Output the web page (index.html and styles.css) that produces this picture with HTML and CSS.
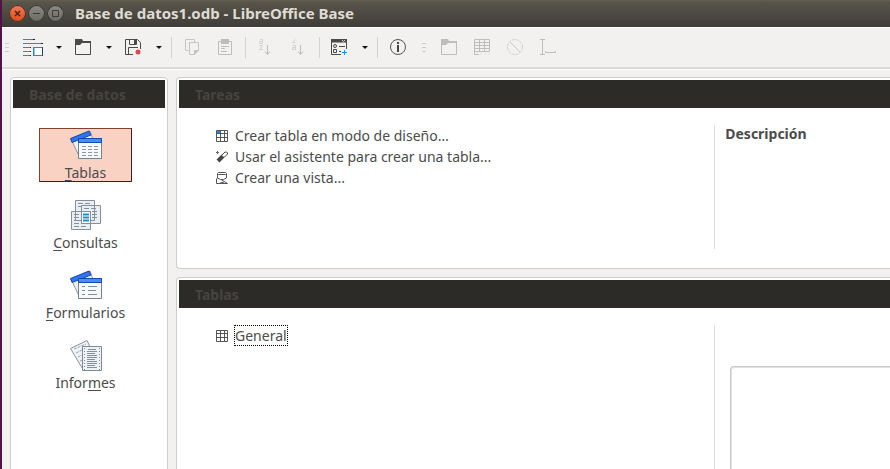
FILE: index.html
```html
<!DOCTYPE html>
<html lang="es">
<head>
<meta charset="utf-8">
<title>Base de datos1.odb - LibreOffice Base</title>
<link rel="stylesheet" href="styles.css">
</head>
<body>
<div class="window">
  <header class="titlebar">
    <button class="win-btn close" aria-label="Cerrar"><svg viewBox="0 0 17 17"><path d="M6 6l5 5M11 6l-5 5" stroke="#46261b" stroke-width="1.6"/></svg></button>
    <button class="win-btn" aria-label="Minimizar"><svg viewBox="0 0 17 17"><path d="M5 8.5h7" stroke="#3c3b37"/></svg></button>
    <button class="win-btn" aria-label="Maximizar"><svg viewBox="0 0 17 17"><path d="M5.5 5.5h6v6h-6z" stroke="#3c3b37" fill="none"/></svg></button>
    <h1>Base de datos1.odb - LibreOffice Base</h1>
  </header>

  <div class="toolbar" role="toolbar">
    <span class="grip first"></span>
    <button class="tool" aria-label="Nuevo"><svg viewBox="0 0 17 17"><path d="M-2 .5h12M-2 4.5h20M-2 8.5h8M-2 12.5h8M-2 16.500h8" stroke="#1b8fd6"/><path d="M8 .5h2M16 4.500h2M5 8.5h1M5 12.500h1M5 16.500h1" stroke="#222"/><path d="M9 8.500h8.500v8H9z" fill="#fff" stroke="#1b8fd6"/><path d="M17.500 8v9" stroke="#246"/><path d="M8.500 8v9" stroke="#1b8fd6"/></svg></button>
    <button class="arrow" aria-label="Opciones de nuevo"></button>
    <button class="tool" aria-label="Abrir"><svg viewBox="0 0 17 17"><path d="M.5 1v14.500h15v-12H7" fill="none" stroke="#4a4a4a"/><path d="M0 0h7l1 2h8v2H7L5 6H0z" fill="#4a4a4a"/></svg></button>
    <button class="arrow" aria-label="Abrir reciente"></button>
    <button class="tool" aria-label="Guardar"><svg viewBox="0 0 17 17"><path d="M8 15.500H.5V.5h12l3 3V10M3.500 15V8.500H13M4.500 1v4.500h7V1" fill="none" stroke="#4a4a4a"/><path d="M9 1h2v4H9z" fill="#4a4a4a"/><circle cx="13" cy="13" r="2.500" fill="#e0474c"/></svg></button>
    <button class="arrow" aria-label="Opciones de guardar"></button>
    <span class="sep"></span>
    <button class="tool" disabled aria-label="Copiar"><svg viewBox="0 0 17 17"><path d="M5.500 11.500h-3V.5h9v3M6.500 3.500h9v8l-4 4h-5z" fill="none" stroke="#c4c4c4"/><path d="M11 11h5l-5 5z" fill="#c4c4c4"/></svg></button>
    <button class="tool" disabled aria-label="Pegar"><svg viewBox="0 0 17 17"><path d="M2.500 2.500h13v13h-13zM5 7.500h8M5 9.500h4M5 12.500h6" fill="none" stroke="#bdbdbd"/><path d="M5 0h8v5H5z" fill="#bdbdbd"/></svg></button>
    <span class="sep"></span>
    <button class="tool" disabled aria-label="Orden ascendente"><svg viewBox="0 0 17 17"><path d="M3 .5h2.500v4H2.500v-2h3M2.500 6.500h3l-3 4h3.500" fill="none" stroke="#d2d2d2"/><path d="M10.500 6v9M8 12.500l2.500 3 2.500-3" fill="none" stroke="#bdbdbd"/></svg></button>
    <button class="tool" disabled aria-label="Orden descendente"><svg viewBox="0 0 17 17"><path d="M5.500 .5l-3 3h3M2.500 6.500h3v4h-3v-2h3" fill="none" stroke="#d2d2d2"/><path d="M10.500 6v9M8 12.500l2.500 3 2.500-3" fill="none" stroke="#bdbdbd"/></svg></button>
    <span class="sep"></span>
    <button class="tool" aria-label="Formulario"><svg viewBox="0 0 17 17"><path d="M10 15.500H.5V3M15.500 3v7" fill="none" stroke="#4a4a4a"/><path d="M0 0h16v3.500H0z" fill="#4a4a4a"/><path d="M11 1l1.500 1.500L14 1" fill="none" stroke="#ddd"/><circle cx="4" cy="7" r="1.500" fill="none" stroke="#4a4a4a"/><path d="M2.500 10.500h3v3h-3zM8 7.500h6M8 12.500h2" fill="none" stroke="#4a4a4a"/><path d="M13.500 11v5M11 13.500h5" stroke="#1696e8"/></svg></button>
    <button class="arrow" aria-label="Opciones de formulario"></button>
    <span class="sep"></span>
    <button class="tool" aria-label="Ayuda"><svg viewBox="0 0 17 17"><circle cx="9" cy="8" r="7.500" fill="none" stroke="#555"/><path d="M8 3h2v2H8zM8 6h2v7H8z" fill="#444"/></svg></button>
    <span class="grip second"></span>
    <button class="tool" disabled aria-label="Abrir objeto"><svg viewBox="0 0 17 17"><path d="M.5 1v14.500h15v-12H7" fill="none" stroke="#bdbdbd"/><path d="M0 0h7l1 2h8v2H7L5 6H0z" fill="#bdbdbd"/></svg></button>
    <button class="tool" disabled aria-label="Editar"><svg viewBox="0 0 17 17"><path d="M5 15.500H.5V.5h15v12H0M0 3.500h16M0 6.500h16M0 9.500h16M5.500 0v13M10.500 0v13" fill="none" stroke="#bdbdbd"/><path d="M6 15h10" stroke="#ddd" stroke-dasharray="2 2"/></svg></button>
    <button class="tool" disabled aria-label="Eliminar"><svg viewBox="0 0 17 17"><circle cx="8" cy="8" r="7.500" fill="none" stroke="#cfcfcf" stroke-dasharray="3 1"/><path d="M3 3l10 10" stroke="#c8c8c8"/></svg></button>
    <button class="tool" disabled aria-label="Cambiar nombre"><svg viewBox="0 0 17 17"><path d="M0 .5h5M2.500 0v16M0 15.500h5M5.500 12v1.500h10V12" fill="none" stroke="#bdbdbd"/></svg></button>
  </div>

  <div class="workspace">
    <nav class="panel sidebar">
      <h2>Base de datos</h2>
      <div class="categories">
        <button class="category selected"><svg viewBox="0 0 32 32"><path d="M1 9L20 1l6 17-16 10z" fill="#eef1f4" stroke="#8d99a5"/><path d="M.5 8.500L19 1l2 4L2 12.500z" fill="#2f75f0" stroke="#1748a5"/><path d="M8.500 8.500h23v20h-23z" fill="#f6f8fa" stroke="#75818c"/><path d="M8.500 8.500h23v4h-23z" fill="#4a8bfb" stroke="#154bad"/><path d="M12 16.500h16M12 19.500h16M12 22.500h16M12 25.500h16" stroke="#8d98a2" stroke-dasharray="4 2"/></svg><span><u>T</u>ablas</span></button>
        <button class="category"><svg viewBox="0 0 32 32"><g stroke="#84909b" fill="#e9eef2"><path d="M5.500 .5h19v20h-19zM11.500 5.500h19v18h-19zM1.500 11.500h19v18h-19z"/><path d="M11.500 11.500h9v12h-9z" fill="#fff"/></g><path d="M8 3.500h14M8 6.500h3M14 8.500h14M22 11.500h6M22 14.500h6M22 17.500h6M4 14.500h5M4 17.500h5M4 20.500h5M4 23.500h5M4 26.500h13" stroke="#84909b" stroke-dasharray="5 2"/><path d="M13 14.500h6M13 17.500h6M13 20.500h6" stroke="#248bd2" stroke-width="2"/></svg><span><u>C</u>onsultas</span></button>
        <button class="category"><svg viewBox="0 0 32 32"><path d="M1 9L20 1l6 17-16 10z" fill="#eef1f4" stroke="#8d99a5"/><path d="M.5 8.500L19 1l2 4L2 12.500z" fill="#2f75f0" stroke="#1748a5"/><path d="M8.500 8.500h23v20h-23z" fill="#f6f8fa" stroke="#75818c"/><path d="M8.500 8.500h23v4h-23z" fill="#4a8bfb" stroke="#154bad"/><path d="M12 16.500h3M12 20.500h3M12 24.500h3M18 16.500h9M18 20.500h8M18 24.500h9" stroke="#808b95"/></svg><span><u>F</u>ormularios</span></button>
        <button class="category"><svg viewBox="0 0 32 32"><path d="M.5 8.500L17 .5l10 21-14 8z" fill="#eff3f6" stroke="#87939d"/><path d="M4 9l12-5M6 13l10-5M8 17l8-4M10 21l6-3" stroke="#9ca5ad" stroke-dasharray="3 1"/><path d="M12.500 6.500h19v24h-19z" fill="#edf2f5" stroke="#7d8993"/><path d="M14.500 8v22M29.500 8v22" stroke="#7d8993" stroke-dasharray="1 2"/><path d="M18 9.500h8M17 11.500h10M17 13.500h8M17 15.500h10M17 17.500h10M17 19.500h8M17 21.500h10M17 23.500h10M17 25.500h8M17 27.500h10" stroke="#86919b"/></svg><span>Infor<u>m</u>es</span></button>
      </div>
    </nav>

    <main class="main">
      <section class="panel">
        <h2>Tareas</h2>
        <div class="split tasks">
          <ul class="list">
            <li><button><svg viewBox="0 0 12 12"><path d="M.5 .5h11v11H.5zM0 3.500h12M0 7.500h12M4.500 0v12M8.500 0v12" fill="none" stroke="#555"/><path d="M1 1h3v2H1z" fill="#1696e8"/></svg><span>Crear tabla en modo de diseño…</span></button></li>
            <li><button><svg viewBox="0 0 12 12"><path d="M2 10l5-5" stroke="#444" stroke-width="4"/><path d="M5.500 4.500L9 1h1.500l1 1v1L8 6.500z" fill="#fff" stroke="#444"/><path d="M1.500 0v3M0 1.500h3" stroke="#666"/></svg><span>Usar el asistente para crear una tabla...</span></button></li>
            <li><button><svg viewBox="0 0 12 12"><path d="M1.500 2v4l3 1.500h3L10.500 6V2M1.500 6L.5 7v4.500h11L5 7.500M1 11.500h2l5-1.500" fill="none" stroke="#555"/><path d="M2.500 .5h7l1 1-1 1h-7l-1-1z" fill="#fff" stroke="#555"/></svg><span>Crear una vista...</span></button></li>
          </ul>
          <div class="side"><h3>Descripción</h3></div>
        </div>
      </section>
      <section class="panel objects">
        <h2>Tablas</h2>
        <div class="split">
          <ul class="list">
            <li><button class="focused"><svg viewBox="0 0 12 12"><path d="M.5 .5h11v11H.5zM0 3.500h12M0 7.500h12M4.500 0v12M8.500 0v12" fill="none" stroke="#555"/></svg><span>General</span></button></li>
          </ul>
          <div class="side"><div class="preview"></div></div>
        </div>
      </section>
    </main>
  </div>
</div>
</body>
</html>
```
FILE: styles.css
```css
* { box-sizing: border-box; }
body {
  margin: 0;
  color: #4c4c4c;
  background: #f2f1f0;
  font: 14px/21px "Noto Sans", "Open Sans", sans-serif;
}
h1, h2, h3, ul { margin: 0; padding: 0; font-size: inherit; }
button { margin: 0; padding: 0; border: 0; background: none; color: inherit; font: inherit; }
svg { display: block; overflow: visible; }

.window {
  display: flex;
  flex-direction: column;
  height: 100vh;
  overflow: hidden;
  border-left: 2px solid #55104b;
}

.titlebar {
  display: flex;
  flex: none;
  align-items: center;
  gap: 2px;
  height: 27px;
  padding-left: 7px;
  background: linear-gradient(#64604f, #59554b 2px, #3e3d38);
  color: #dfdbd2;
}
.titlebar h1 { margin-left: 9px; font-size: 15px; white-space: nowrap; }
.win-btn {
  width: 17px;
  height: 17px;
  border-radius: 50%;
  background: linear-gradient(#8d8b83, #696861);
  box-shadow: 0 0 0 1px #35342f inset;
}
.win-btn.close { background: linear-gradient(#f47b55, #df4a18); }

.toolbar {
  display: flex;
  flex: none;
  align-items: center;
  height: 42px;
  border-top: 1px solid #fff;
  border-bottom: 2px solid #dcdad8;
}
.grip {
  height: 9px;
  flex: none;
  background: repeating-linear-gradient(#cfcdca 0 1px, transparent 1px 4px) no-repeat content-box;
}
.grip.first { width: 15px; padding: 0 8px 0 3px; }
.grip.second { width: 19px; padding: 0 7px 0 8px; }
.tool { flex: none; width: 33px; padding: 0 8px; }
.tool svg { width: 17px; height: 17px; }
.arrow { flex: none; width: 17px; height: 17px; display: grid; place-items: center; }
.arrow::before { content: ""; border: 3px solid transparent; border-top-color: #111; border-bottom: 0; }
.sep { flex: none; width: 8px; height: 21px; padding-left: 4px; }
.sep::before { content: ""; display: block; width: 1px; height: 100%; background: #d5d3d0; }

.workspace {
  display: flex;
  flex: 1;
  gap: 8px;
  min-height: 0;
  padding: 7px 0 0 8px;
  border-top: 1px solid #fff;
}
.panel {
  border: 1px solid #cfccc9;
  border-radius: 4px;
  padding: 2px;
  background: #fff;
}
.panel h2 {
  height: 28px;
  padding: 4px 16px;
  background: #2d2b28;
  color: #454440;
  font-size: 14px;
  line-height: 21px;
}
.sidebar { flex: none; width: 158px; margin-bottom: -8px; }
.categories { display: flex; flex-direction: column; gap: 16px; padding: 20px 33px 0 26px; }
.category {
  display: flex;
  flex-direction: column;
  align-items: center;
  justify-content: flex-start;
  height: 54px;
  padding-top: 1px;
  border: 1px solid transparent;
  line-height: 21px;
}
.category svg { flex: none; width: 32px; height: 32px; }
.category u { text-underline-offset: 2px; }
.selected { background: #f9d2c4; border-color: #85402b #481c10 #481c10 #85402b; }

.main { display: flex; flex: 1; flex-direction: column; gap: 8px; min-width: 0; }
.main .panel { border-right: 0; border-radius: 4px 0 0 4px; padding-right: 0; }
.objects { display: flex; flex: 1; flex-direction: column; margin-bottom: -8px; }
.objects .split { flex: 1; }
.split { display: grid; grid-template-columns: 3fr 1fr; column-gap: 8px; padding-top: 17px; }
.tasks { min-height: 158px; padding-bottom: 17px; }
.list { list-style: none; padding-left: 37px; }
.list li { height: 21px; }
.list button { display: flex; align-items: center; gap: 6px; height: 21px; white-space: nowrap; }
.list svg { width: 12px; height: 12px; }
.list span { border: 1px solid transparent; line-height: 19px; }
.list .focused span { border: 1px dotted #000; }
.side { border-left: 1px solid #dcdcdc; }
.side h3 { padding: 0 10px; line-height: 17px; }
.preview {
  height: calc(100% - 41px);
  margin: 41px 0 0 15px;
  border: 1px solid #cbc9c7;
  border-right: 0;
  border-radius: 4px 0 0;
  box-shadow: inset 1px 1px 0 #e4e3e2;
}
```
